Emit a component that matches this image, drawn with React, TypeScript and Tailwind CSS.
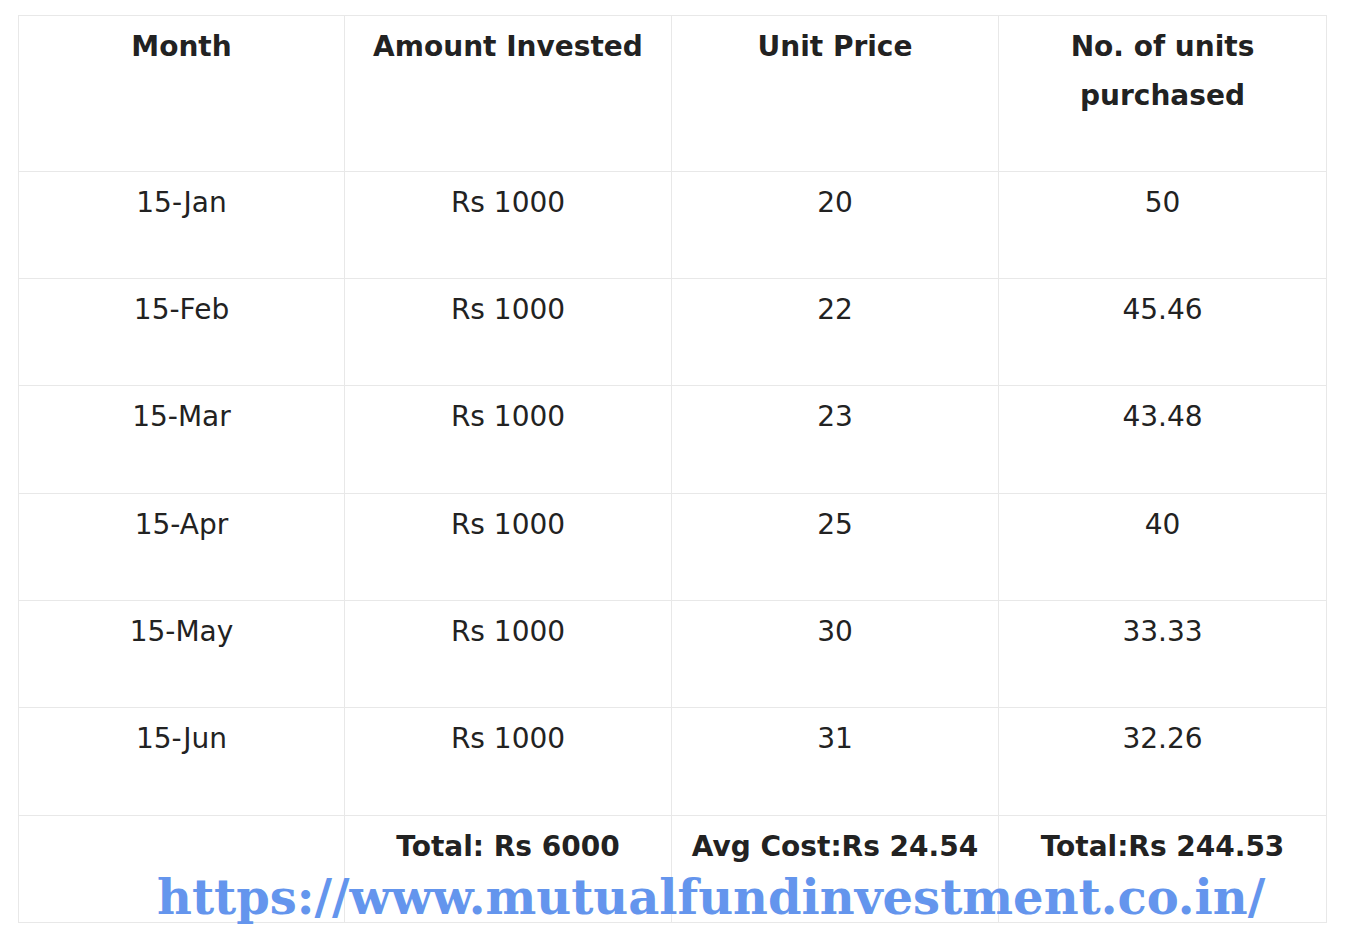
import React from "react";

const HEAD = ["Month", "Amount Invested", "Unit Price", "No. of units purchased"];

const ROWS: [string, string, string, string, string][] = [
  ["15-Jan", "Rs 1000", "20", "50", "h-[107px]"],
  ["15-Feb", "Rs 1000", "22", "45.46", "h-[107px]"],
  ["15-Mar", "Rs 1000", "23", "43.48", "h-[108px]"],
  ["15-Apr", "Rs 1000", "25", "40", "h-[107px]"],
  ["15-May", "Rs 1000", "30", "33.33", "h-[107px]"],
  ["15-Jun", "Rs 1000", "31", "32.26", "h-[108px]"],
];

const FOOT = ["", "Total: Rs 6000", "Avg Cost:Rs 24.54", "Total:Rs 244.53"];

const grid = "grid grid-cols-[326px_327px_327px_327px]";

function Cell({ children, last, bold }: { children: React.ReactNode; last?: boolean; bold?: boolean }) {
  return (
    <div
      className={
        "px-[10px] pt-[6px] text-center text-[28px] leading-[49px] text-[#222] " +
        (bold ? "font-bold " : "font-normal ") +
        (last ? "" : "border-r border-[#e8e8e8]")
      }
    >
      {children}
    </div>
  );
}

export default function App() {
  return (
    <div className="relative min-h-[933px] w-[1347px] bg-white pt-[15px] pl-[18px] font-['DejaVu_Sans',Verdana,sans-serif]">
      <div className="w-[1309px] border border-[#e8e8e8]">
        <div className={grid + " h-[156px] border-b border-[#e8e8e8]"}>
          {HEAD.map((h, i) => (
            <Cell key={h} bold last={i === 3}>
              {h === "No. of units purchased" ? (
                <>
                  No. of units
                  <br />
                  purchased
                </>
              ) : (
                h
              )}
            </Cell>
          ))}
        </div>
        {ROWS.map((r) => (
          <div key={r[0]} className={grid + " border-b border-[#e8e8e8] " + r[4]}>
            {r.slice(0, 4).map((v, i) => (
              <Cell key={i} last={i === 3}>
                {v}
              </Cell>
            ))}
          </div>
        ))}
        <div className={grid + " h-[106px]"}>
          {FOOT.map((v, i) => (
            <Cell key={i} bold last={i === 3}>
              {v}
            </Cell>
          ))}
        </div>
      </div>
      {/* watermark over the last row */}
      <div className="absolute left-[157px] top-[867px] whitespace-nowrap text-[48px] font-bold leading-[60px] text-[#6495ed] font-['DejaVu_Serif',serif]">
        https://www.mutualfundinvestment.co.in/
      </div>
    </div>
  );
}
